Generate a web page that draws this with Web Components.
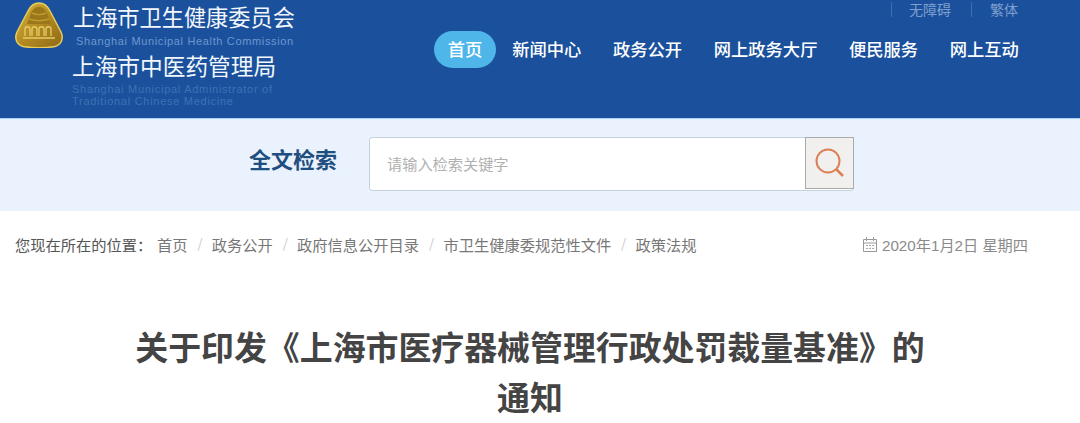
<!DOCTYPE html>
<html lang="zh-CN">
<head>
<meta charset="utf-8">
<title>关于印发《上海市医疗器械管理行政处罚裁量基准》的通知</title>
<style>
  html, body { margin: 0; padding: 0; background: #fff; }
  body { font-family: "Noto Sans CJK SC", "Liberation Sans", sans-serif; overflow: hidden; height: 423px; }
</style>
</head>
<body>
<site-header>
  <nav-item active>首页</nav-item>
  <nav-item>新闻中心</nav-item>
  <nav-item>政务公开</nav-item>
  <nav-item>网上政务大厅</nav-item>
  <nav-item>便民服务</nav-item>
  <nav-item>网上互动</nav-item>
</site-header>
<search-band></search-band>
<bread-crumb>
  <span>首页</span><span>政务公开</span><span>政府信息公开目录</span><span>市卫生健康委规范性文件</span><span>政策法规</span>
</bread-crumb>
<article-title>关于印发《上海市医疗器械管理行政处罚裁量基准》的通知</article-title>

<script>
// Header: logo, the two office names, top links and the main nav
class SiteHeader extends HTMLElement {
  constructor() {
    super();
    const shadow = this.attachShadow({mode: 'open'});
    shadow.innerHTML = `
    <style>
      :host {
        display: flex;
        box-sizing: border-box;
        height: 119px;
        background: #1b519c;
        border-bottom: 1px solid #a9d3f5;
        color: #fff;
      }
      .logo { flex: none; width: 72px; padding: 2px 0 0 14px; box-sizing: border-box; }
      .names { flex: none; width: 348px; }
      .cn { font-size: 22.2px; line-height: 30px; color: #f2f7fc; white-space: nowrap; }
      .cn1 { margin: 1px 0 0 1px; }
      .cn2 { margin: 4px 0 0 0; font-size: 22.7px; }
      .en { font: 11px/12px "Liberation Sans", sans-serif; white-space: nowrap; }
      .en1 { color: #6d97cf; margin: 4px 0 0 4px; letter-spacing: .65px; }
      .en2 { color: #3f70b4; margin: 2px 0 0 0; letter-spacing: .72px; }
      .right { flex: 1; display: flex; flex-direction: column; }
      .top {
        height: 31px;
        display: flex;
        align-items: flex-start;
        font-size: 14px;
        line-height: 18px;
        color: #7e9fcf;
      }
      .top span { border-left: 1px solid #3f70b0; height: 15px; line-height: 15px; margin-top: 2px; }
      .top .a { margin-left: 471px; padding-left: 17px; }
      .top .b { margin-left: 20px; padding-left: 18px; }
      nav { display: flex; }
    </style>
    <div class="logo">
      <svg width="50" height="46" viewBox="0 0 50 46">
        <defs>
          <linearGradient id="g" x1="0" y1="0" x2="1" y2="1">
            <stop offset="0" stop-color="#d8b33e"/>
            <stop offset=".55" stop-color="#b08720"/>
            <stop offset="1" stop-color="#8d6a17"/>
          </linearGradient>
        </defs>
        <path d="M25 1C30 1 33 3 36 9L47 30C50 37 47 43 41 44.500C31 46 19 46 9 44.500C3 43 0 37 3 30L14 9C17 3 20 1 25 1Z" fill="url(#g)" stroke="#e8cc5c" stroke-width="1.500"/>
        <path d="M25 5C29 5 31 7 33 11L37 22H13L17 11C19 7 21 5 25 5Z" fill="#9a771b"/>
        <path d="M18 11C22 13 28 13 32 11M15 17C21 19 29 19 35 17" stroke="#c09c30" stroke-width="1.500" fill="none"/>
        <path d="M11 34V27C11 24 16 24 16 27V34M18 34V27C18 24 23 24 23 27V34M25 34V27C25 24 30 24 30 27V34M32 34V27C32 24 37 24 37 27V34" stroke="#e6cc68" stroke-width="1.300" fill="none"/>
        <path d="M9 36H41" stroke="#e6cc68" stroke-width="1.500"/>
      </svg>
    </div>
    <div class="names">
      <div class="cn cn1">上海市卫生健康委员会</div>
      <div class="en en1">Shanghai Municipal Health Commission</div>
      <div class="cn cn2">上海市中医药管理局</div>
      <div class="en en2">Shanghai Municipal Administrator of<br>Traditional Chinese Medicine</div>
    </div>
    <div class="right">
      <div class="top"><span class="a">无障碍</span><span class="b">繁体</span></div>
      <nav><slot></slot></nav>
    </div>`;
  }
}

class NavItem extends HTMLElement {
  constructor() {
    super();
    const shadow = this.attachShadow({mode: 'open'});
    shadow.innerHTML = `
    <style>
      :host {
        display: block;
        flex: none;
        height: 37px;
        line-height: 35px;
        padding: 0 15.800px;
        font-size: 17.300px;
        font-weight: 500;
        color: #fff;
        white-space: nowrap;
      }
      :host([active]) { background: #4fb6ea; border-radius: 18.500px; padding: 0 13.700px; margin: 0 .500px 0 14px; }
    </style>
    <slot></slot>`;
  }
}

class SearchBand extends HTMLElement {
  constructor() {
    super();
    const shadow = this.attachShadow({mode: 'open'});
    shadow.innerHTML = `
    <style>
      :host {
        display: flex;
        align-items: flex-start;
        box-sizing: border-box;
        height: 92px;
        padding: 18px 0 0 249px;
        background: #e9f2fd;
      }
      .label { width: 120px; font-size: 22px; line-height: 42px; font-weight: 700; color: #1f4f80; }
      .box {
        width: 485px;
        height: 54px;
        box-sizing: border-box;
        display: flex;
        background: #fff;
        border: 1px solid #c6d1dd;
        border-radius: 3px;
      }
      .ph { flex: 1; padding: 4px 0 0 17px; font-size: 15.200px; line-height: 42px; color: #b1b1b1; }
      .btn {
        flex: none;
        width: 49px;
        height: 52px;
        margin: -1px -1px 0 0;
        box-sizing: border-box;
        display: flex;
        align-items: center;
        justify-content: center;
        padding: 0 2px 3px 0;
        background: #f1f0ef;
        border: 1px solid #a9abab;
      }
    </style>
    <div class="label">全文检索</div>
    <div class="box">
      <div class="ph">请输入检索关键字</div>
      <div class="btn">
        <svg width="32" height="32" viewBox="0 0 32 32">
          <circle cx="15" cy="15" r="11.500" fill="none" stroke="#dc7f55" stroke-width="2"/>
          <path d="M23.500 23.500L30 30" stroke="#dc7f55" stroke-width="2.500" fill="none"/>
        </svg>
      </div>
    </div>`;
  }
}

class BreadCrumb extends HTMLElement {
  constructor() {
    super();
    const shadow = this.attachShadow({mode: 'open'});
    shadow.innerHTML = `
    <style>
      :host {
        display: flex;
        align-items: center;
        box-sizing: border-box;
        height: 66px;
        padding: 0 52px 0 15px;
        font-size: 15.250px;
        color: #777;
      }
      .here { width: 142px; color: #555; white-space: nowrap; }
      .trail { flex: 1; display: flex; }
      ::slotted(span) { margin-right: 24.300px; position: relative; white-space: nowrap; }
      ::slotted(span:not(:last-child))::after {
        content: "/";
        position: absolute;
        right: -15px;
        color: #c8c8c8;
        font-size: 13px;
      }
      .date { display: flex; align-items: center; gap: 5px; color: #8a8a8a; font-family: "Liberation Sans", "Noto Sans CJK SC", sans-serif; font-size: 15.200px; white-space: nowrap; }
    </style>
    <span class="here">您现在所在的位置：</span>
    <div class="trail"><slot></slot></div>
    <div class="date">
      <svg width="14" height="15" viewBox="0 0 14 15">
        <path d="M.5 2.500H13.500V14.500H.5ZM.5 6H13.500M3.500 0V4M10.500 0V4" fill="none" stroke="#999"/>
        <path d="M3 8.500H5M6 8.500H8M9 8.500H11M3 11.500H5M6 11.500H8M9 11.500H11" stroke="#aaa"/>
      </svg>
      <span>2020年1月2日 星期四</span>
    </div>`;
  }
}

class ArticleTitle extends HTMLElement {
  constructor() {
    super();
    const shadow = this.attachShadow({mode: 'open'});
    shadow.innerHTML = `
    <style>
      :host {
        display: block;
        box-sizing: border-box;
        width: 800px;
        margin: 44px 0 0 130px;
        font-size: 32.900px;
        line-height: 50px;
        font-weight: 700;
        color: #444;
        text-align: center;
      }
    </style>
    <slot></slot>`;
  }
}

customElements.define('site-header', SiteHeader);
customElements.define('nav-item', NavItem);
customElements.define('search-band', SearchBand);
customElements.define('bread-crumb', BreadCrumb);
customElements.define('article-title', ArticleTitle);
</script>
</body>
</html>
